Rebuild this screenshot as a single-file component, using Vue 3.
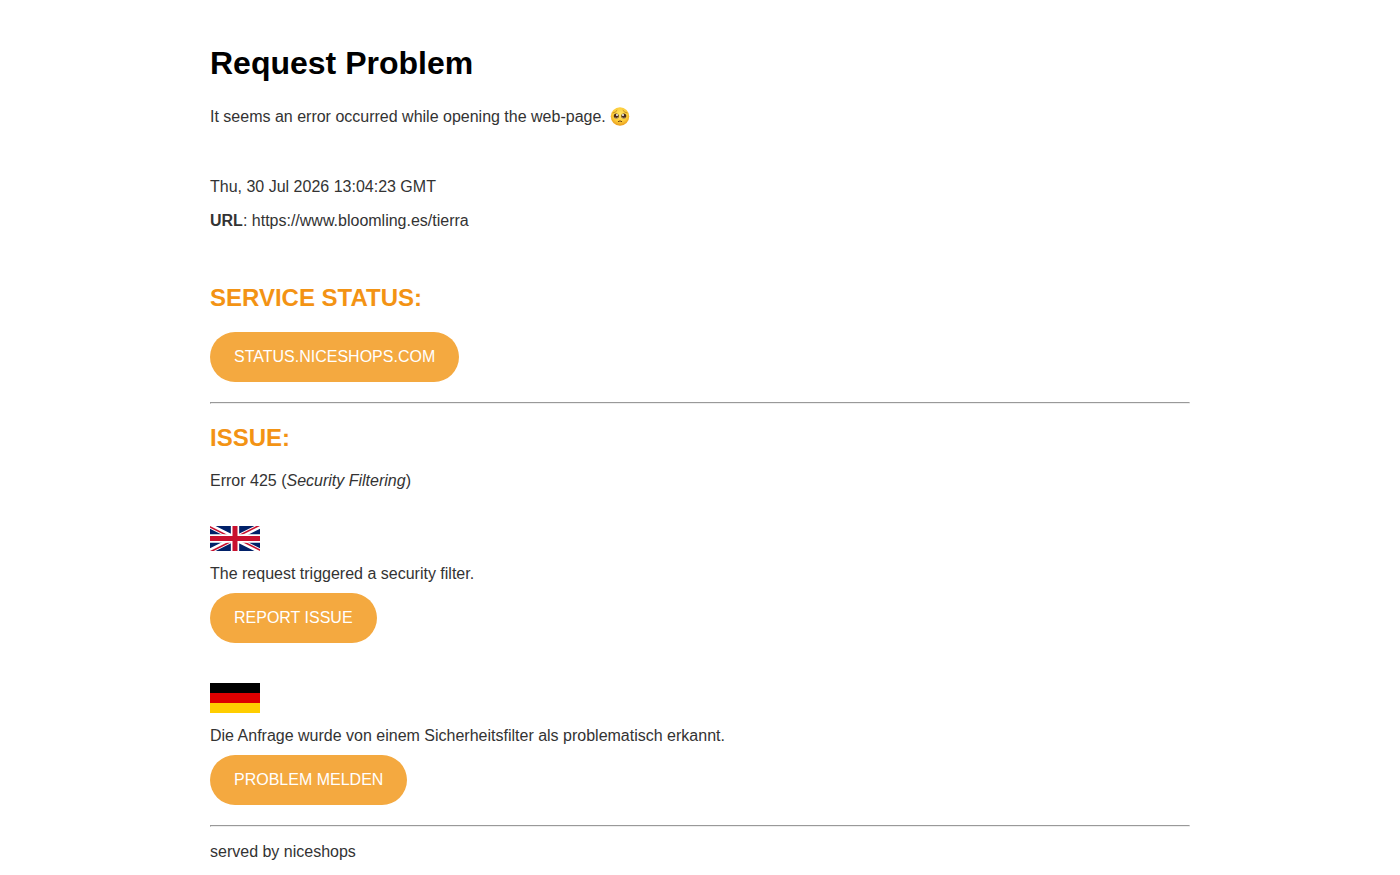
<script setup>
const url = 'https://www.bloomling.es/tierra'
</script>

<template>
  <main class="page">
    <h1>Request Problem</h1>
    <p class="intro">
      <span>It seems an error occurred while opening the web-page.</span>
      <svg class="emoji" viewBox="0 0 40 40" role="img" aria-label="Pleading face">
        <defs>
          <radialGradient id="face" cx="50%" cy="38%" r="62%">
            <stop offset="0" stop-color="#ffe566" />
            <stop offset="0.65" stop-color="#fccb38" />
            <stop offset="1" stop-color="#e99a1c" />
          </radialGradient>
        </defs>
        <circle cx="20" cy="19" r="18.5" fill="url(#face)" />
        <path d="M6 12q5-1 8-5M34 12q-5-1-8-5" fill="none" stroke="#b57a1c" stroke-width="1.6" stroke-linecap="round" />
        <circle cx="12.500" cy="18" r="5" fill="#4b2b16" />
        <circle cx="27.500" cy="18" r="5" fill="#4b2b16" />
        <circle cx="14" cy="16" r="2" fill="#fff" />
        <circle cx="26" cy="16" r="2" fill="#fff" />
        <path d="M9 21q4 3 7 0M24 21q4 3 7 0" fill="none" stroke="#c9b39c" stroke-width="1.4" />
        <path d="M16.500 29q3.500-3 7 0" fill="none" stroke="#6b3d10" stroke-width="2" stroke-linecap="round" />
      </svg>
    </p>

    <section class="details">
      <p>Thu, 30 Jul 2026 13:04:23 GMT</p>
      <p><b>URL</b>: {{ url }}</p>
    </section>

    <section class="status">
      <h2>SERVICE STATUS:</h2>
      <a class="button" href="#status">STATUS.NICESHOPS.COM</a>
    </section>
    <hr />

    <section class="issue">
      <h2>ISSUE:</h2>
      <p>Error 425 (<i>Security Filtering</i>)</p>
    </section>

    <section class="message english">
      <svg class="flag" viewBox="0 0 60 30" role="img" aria-label="English">
        <clipPath id="diagonals"><path d="M30 15h30v15zv15H0zH0V0zV0h30z" /></clipPath>
        <path d="M0 0h60v30H0z" fill="#012169" />
        <path d="M0 0l60 30m0-30L0 30" stroke="#fff" stroke-width="6" />
        <path d="M0 0l60 30m0-30L0 30" clip-path="url(#diagonals)" stroke="#c8102e" stroke-width="4" />
        <path d="M30 0v30M0 15h60" stroke="#fff" stroke-width="10" />
        <path d="M30 0v30M0 15h60" stroke="#c8102e" stroke-width="6" />
      </svg>
      <p>The request triggered a security filter.</p>
      <a class="button" href="#report">REPORT ISSUE</a>
    </section>

    <section class="message" lang="de">
      <svg class="flag" viewBox="0 0 5 3" role="img" aria-label="Deutsch">
        <path d="M0 0h5v3H0z" fill="#000" />
        <path d="M0 1h5v2H0z" fill="#d00" />
        <path d="M0 2h5v1H0z" fill="#ffce00" />
      </svg>
      <p>Die Anfrage wurde von einem Sicherheitsfilter als problematisch erkannt.</p>
      <a class="button" href="#melden">PROBLEM MELDEN</a>
    </section>
    <hr />

    <footer>served by niceshops</footer>
  </main>
</template>

<style>
body {
  margin: 0;
  background: #fff;
}
</style>

<style scoped>
.page {
  width: 70%;
  margin: 0 auto;
  padding: 45px 0 14px;
  box-sizing: border-box;
  font-family: "Liberation Sans", Arial, sans-serif;
  font-size: 16px;
  line-height: 18px;
  color: #333;
}
h1, h2, p {
  margin: 0;
}
h1 {
  font-size: 32px;
  line-height: 36px;
  color: #000;
}
h2 {
  font-size: 24px;
  line-height: 28px;
  color: #f39314;
}
.intro {
  display: flex;
  align-items: center;
  gap: 4px;
  margin-top: 26px;
}
.emoji {
  width: 20px;
  height: 20px;
}
.details {
  display: grid;
  gap: 16px;
  margin-top: 51px;
}
.status {
  display: grid;
  justify-items: start;
  gap: 20px;
  margin-top: 54px;
}
.button {
  padding: 16px 24px;
  border-radius: 25px;
  background: #f4a940;
  color: #fff;
  text-decoration: none;
}
hr {
  margin: 20px 0;
  border: 1px solid;
  border-color: #999 #eee #eee #999;
}
.issue {
  display: grid;
  gap: 20px;
}
.message {
  display: grid;
  justify-items: start;
  gap: 10px;
  margin-top: 40px;
}
.message.english {
  margin-top: 36px;
}
.flag {
  display: block;
  width: 50px;
  margin-bottom: 4px;
}
hr + footer {
  margin-top: -4px;
}
</style>
